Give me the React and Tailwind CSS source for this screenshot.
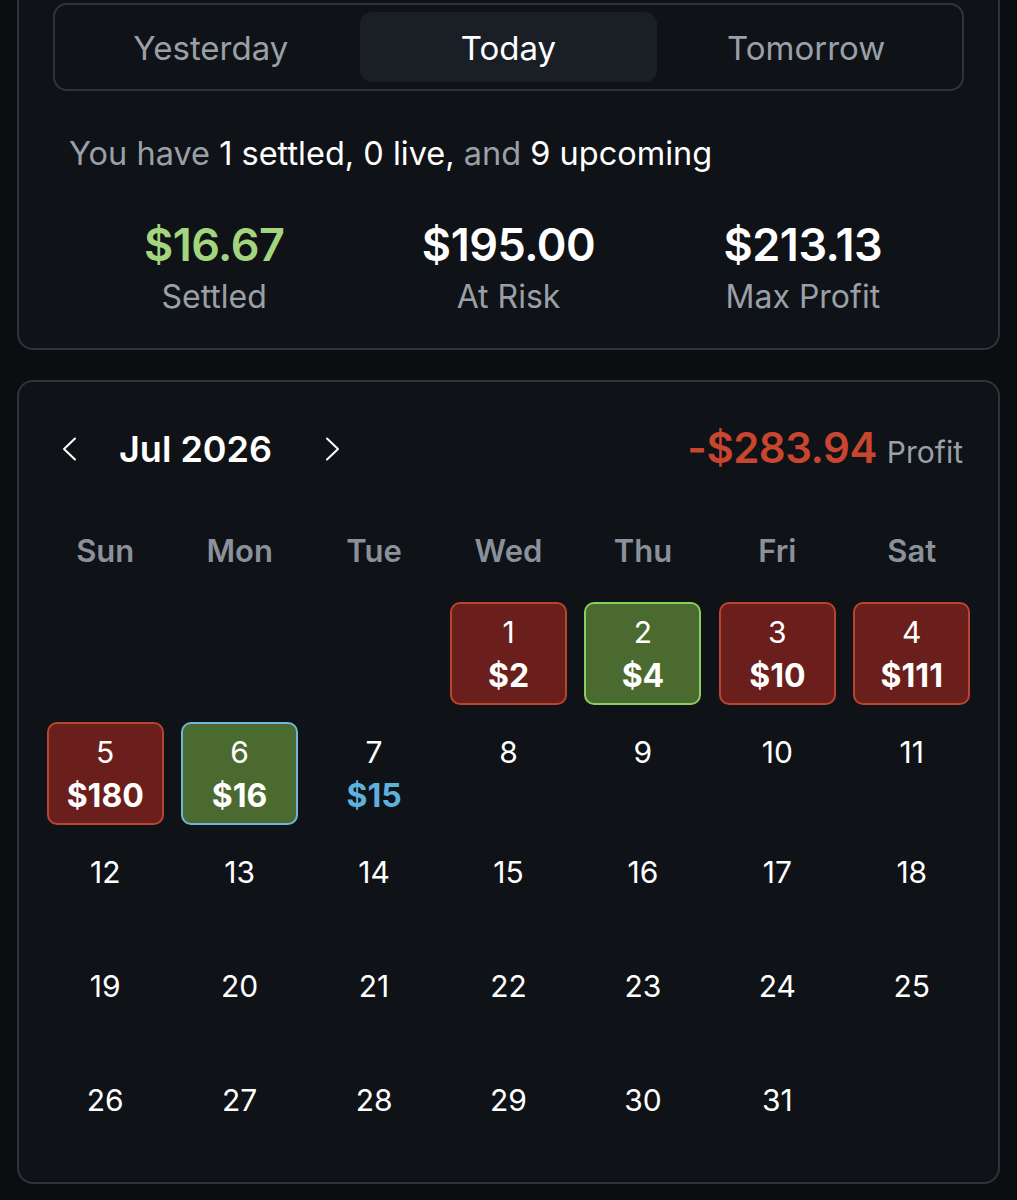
const tabs = ["Yesterday", "Today", "Tomorrow"];

const stats = [
  { value: "$16.67", label: "Settled", tone: "text-[#a3d57f]" },
  { value: "$195.00", label: "At Risk", tone: "text-white" },
  { value: "$213.13", label: "Max Profit", tone: "text-white" },
];

const weekdays = ["Sun", "Mon", "Tue", "Wed", "Thu", "Fri", "Sat"];

// day -> { amount, kind }
const results = {
  1: { amount: "$2", kind: "loss" },
  2: { amount: "$4", kind: "win" },
  3: { amount: "$10", kind: "loss" },
  4: { amount: "$111", kind: "loss" },
  5: { amount: "$180", kind: "loss" },
  6: { amount: "$16", kind: "today" },
  7: { amount: "$15", kind: "pending" },
};

const boxStyles = {
  loss: "bg-[#6b1f1c] border-[#b8452f]",
  win: "bg-[#4b6a2f] border-[#8dcc5e]",
  today: "bg-[#4b6a2f] border-[#6db6d6]",
  pending: "border-transparent",
};

function Chevron({ dir }) {
  return (
    <svg width="15" height="24" viewBox="0 0 15 24" fill="none" className="text-white">
      <path
        d={dir === "left" ? "M13 1.5 L2 12 L13 22.5" : "M2 1.5 L13 12 L2 22.5"}
        stroke="currentColor"
        strokeWidth="2"
        strokeLinecap="round"
        strokeLinejoin="round"
      />
    </svg>
  );
}

function DayCell({ day }) {
  if (!day) return <div />;
  const r = results[day];
  const kind = r ? r.kind : "pending";
  return (
    <div className="flex justify-center">
      <div
        className={`w-[117px] h-[103px] rounded-[10px] border-2 flex flex-col items-center pt-[10px] ${boxStyles[kind]}`}
      >
        <span className="text-[30px] leading-[36px] text-white">{day}</span>
        {r && (
          <span
            className={`text-[32px] leading-[40px] font-bold mt-[6px] ${
              kind === "pending" ? "text-[#5db1dd]" : "text-white"
            }`}
          >
            {r.amount}
          </span>
        )}
      </div>
    </div>
  );
}

export default function App() {
  // July 2026 starts on a Wednesday
  const cells = [null, null, null];
  for (let d = 1; d <= 31; d++) cells.push(d);
  while (cells.length % 7) cells.push(null);
  const rows = [];
  for (let i = 0; i < cells.length; i += 7) rows.push(cells.slice(i, i + 7));
  const rowHeights = ["h-[102px]", "h-[102px]", "h-[96px]", "h-[96px]", "h-[96px]"];

  return (
    <div
      className="min-h-screen bg-[#0b0e11] px-[17px] pb-[20px] overflow-hidden"
      style={{ fontFamily: "Inter, 'Noto Sans', sans-serif" }}
    >
      {/* Daily summary */}
      <div className="-mt-[30px] pt-[31px] pb-[31px] rounded-[16px] border-2 border-[#2f343a] bg-[#0f1216]">
        <div className="mx-[34px] rounded-[14px] border-2 border-[#2f343a] p-[7px] grid grid-cols-3">
          {tabs.map((t) => (
            <div
              key={t}
              className={`h-[70px] pt-[4px] rounded-[12px] flex items-center justify-center text-[33px] ${
                t === "Today" ? "bg-[#1a1f26] text-white" : "text-[#9aa0a8]"
              }`}
            >
              {t}
            </div>
          ))}
        </div>

        <p className="mt-[43px] ml-[50px] text-[32.5px] leading-[40px] text-[#9aa0a8]">
          You have <span className="text-white">1 settled, 0 live,</span> and{" "}
          <span className="text-white">9 upcoming</span>
        </p>

        <div className="mt-[45px] mx-[48px] grid grid-cols-3">
          {stats.map((s) => (
            <div key={s.label} className="flex flex-col items-center">
              <span className={`text-[45px] leading-[52px] font-semibold tracking-[-0.5px] ${s.tone}`}>
                {s.value}
              </span>
              <span className="text-[32px] leading-[40px] text-[#9aa0a8] mt-[6px]">{s.label}</span>
            </div>
          ))}
        </div>
      </div>

      {/* Monthly calendar */}
      <div className="mt-[30px] rounded-[16px] border-2 border-[#2f343a] bg-[#0f1216] px-[19px] pb-[16px]">
        <div className="flex items-center justify-between pt-[41px] pl-[24px] pr-[16px]">
          <div className="flex items-center">
            <Chevron dir="left" />
            <span className="ml-[42px] text-[36px] leading-[44px] font-semibold text-white">Jul 2026</span>
            <span className="ml-[53px]">
              <Chevron dir="right" />
            </span>
          </div>
          <div className="flex items-baseline">
            <span className="text-[42px] leading-[50px] font-semibold text-[#c8452f] tracking-[-0.5px]">
              -$283.94
            </span>
            <span className="ml-[10px] text-[30px] text-[#9aa0a8]">Profit</span>
          </div>
        </div>

        <div className="grid grid-cols-7 mt-[57px]">
          {weekdays.map((w) => (
            <div key={w} className="text-center text-[31px] leading-[38px] font-semibold text-[#8a919a]">
              {w}
            </div>
          ))}
        </div>

        <div className="mt-[32px] flex flex-col gap-[18px]">
          {rows.map((row, i) => (
            <div key={i} className={`grid grid-cols-7 ${rowHeights[i]}`}>
              {row.map((d, j) => (
                <DayCell key={j} day={d} />
              ))}
            </div>
          ))}
        </div>
      </div>
    </div>
  );
}
